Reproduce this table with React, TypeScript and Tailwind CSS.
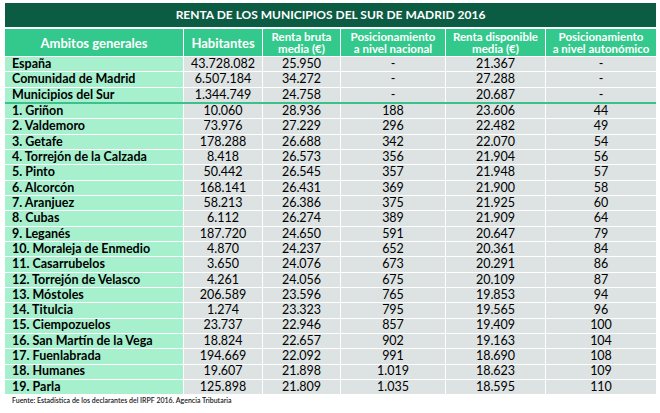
import React from 'react';

type Row = [string, string, string, string, string, string];

const summary: Row[] = [
  ['España', '43.728.082', '25.950', '-', '21.367', '-'],
  ['Comunidad de Madrid', '6.507.184', '34.272', '-', '27.288', '-'],
  ['Municipios del Sur', '1.344.749', '24.758', '-', '20.687', '-'],
];

const towns: Row[] = [
  ['1. Griñon', '10.060', '28.936', '188', '23.606', '44'],
  ['2. Valdemoro', '73.976', '27.229', '296', '22.482', '49'],
  ['3. Getafe', '178.288', '26.688', '342', '22.070', '54'],
  ['4. Torrejón de la Calzada', '8.418', '26.573', '356', '21.904', '56'],
  ['5. Pinto', '50.442', '26.545', '357', '21.948', '57'],
  ['6. Alcorcón', '168.141', '26.431', '369', '21.900', '58'],
  ['7. Aranjuez', '58.213', '26.386', '375', '21.925', '60'],
  ['8. Cubas', '6.112', '26.274', '389', '21.909', '64'],
  ['9. Leganés', '187.720', '24.650', '591', '20.647', '79'],
  ['10. Moraleja de Enmedio', '4.870', '24.237', '652', '20.361', '84'],
  ['11. Casarrubelos', '3.650', '24.076', '673', '20.291', '86'],
  ['12. Torrejón de Velasco', '4.261', '24.056', '675', '20.109', '87'],
  ['13. Móstoles', '206.589', '23.596', '765', '19.853', '94'],
  ['14. Titulcia', '1.274', '23.323', '795', '19.565', '96'],
  ['15. Ciempozuelos', '23.737', '22.946', '857', '19.409', '100'],
  ['16. San Martín de la Vega', '18.824', '22.657', '902', '19.163', '104'],
  ['17. Fuenlabrada', '194.669', '22.092', '991', '18.690', '108'],
  ['18. Humanes', '19.607', '21.898', '1.019', '18.623', '109'],
  ['19. Parla', '125.898', '21.809', '1.035', '18.595', '110'],
];

const cols = 'grid grid-cols-[178px_78px_77px_104px_99px_110px] gap-x-px';

const DataRow = ({ row, first }: { row: Row; first?: boolean }) => (
  <div className={`${cols} h-[14.33px] ${first ? '' : 'mt-px'}`}>
    <div className="bg-[#a6f0ce] pl-[7px] flex items-center text-[12.5px] font-bold text-black leading-none">
      {row[0]}
    </div>
    {row.slice(1).map((v, i) => (
      <div key={i} className="bg-[#dde3e3] flex items-center justify-center text-[12.5px] text-black leading-none">
        {v}
      </div>
    ))}
  </div>
);

const headers = [
  ['Ambitos generales'],
  ['Habitantes'],
  ['Renta bruta', 'media (€)'],
  ['Posicionamiento', 'a nivel nacional'],
  ['Renta disponible', 'media (€)'],
  ['Posicionamiento', 'a nivel autonómico'],
];

export default function App() {
  return (
    <div className="w-[660px] h-[413px] bg-white pt-[3px] pl-[5px] font-['Lato',sans-serif]">
      <div className="w-[651px]">
        {/* Title band */}
        <div className="h-[24px] bg-[#0c5c44] flex items-center justify-center text-white text-[12px] font-bold">
          RENTA DE LOS MUNICIPIOS DEL SUR DE MADRID 2016
        </div>

        {/* Column headers */}
        <div className={`${cols} h-[27px] mt-[2px]`}>
          {headers.map((h, i) => (
            <div key={i} className="bg-[#34c98c] flex flex-col items-center justify-center text-white font-bold text-[11.5px] leading-[11.5px]">
              {h.map(line => (
                <span key={line} className={h.length === 1 ? 'text-[13px] leading-[14px]' : ''}>{line}</span>
              ))}
            </div>
          ))}
        </div>

        <div className="mt-px">
          {summary.map((r, i) => (
            <DataRow key={r[0]} row={r} first={i === 0} />
          ))}
        </div>
        <div className="h-[2px] bg-[#3cc08c]" />
        {towns.map((r, i) => (
          <DataRow key={r[0]} row={r} first={i === 0} />
        ))}

        {/* Footer */}
        <div className="pl-[7px] mt-[1px] text-[7px] leading-[10px] text-[#222] font-semibold">
          Fuente: Estadística de los declarantes del IRPF 2016. Agencia Tributaria
        </div>
      </div>
    </div>
  );
}
